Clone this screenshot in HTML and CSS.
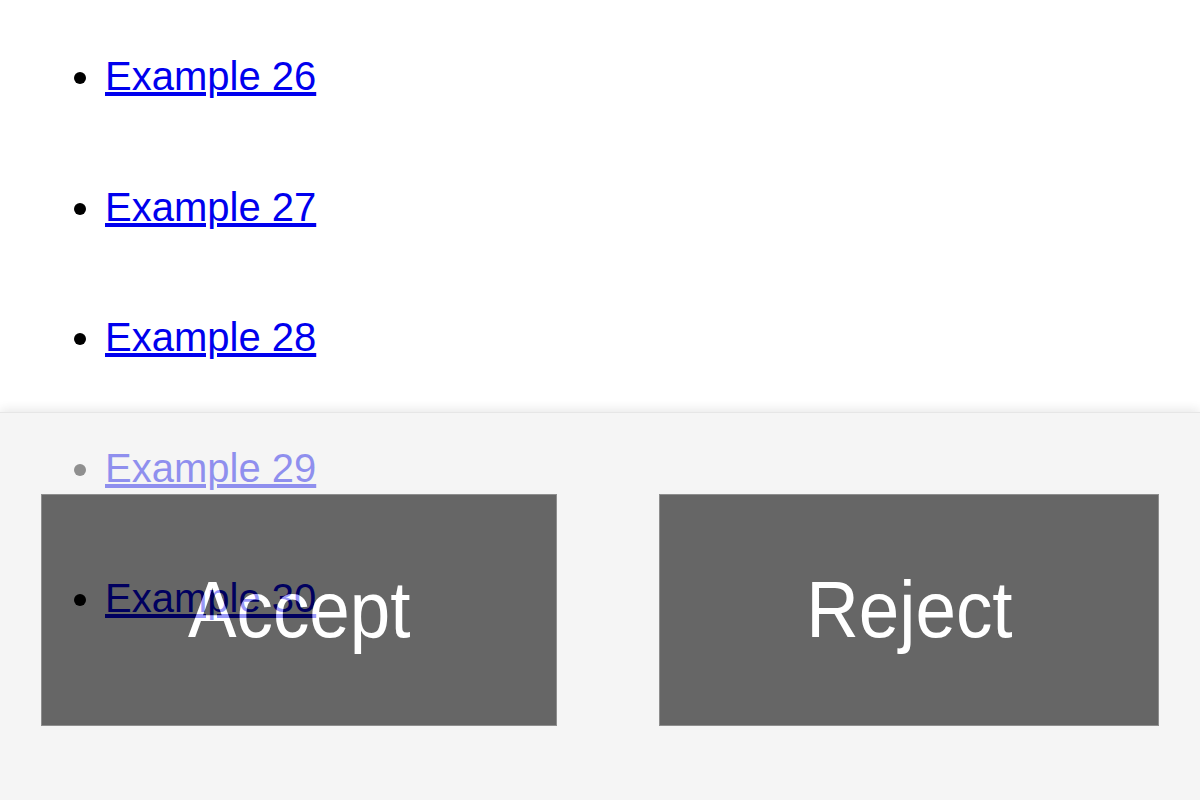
FILE: index.html
```html
<!DOCTYPE html>
<html lang="en">
<head>
  <meta charset="UTF-8">
  <title>Examples</title>
  <meta name="viewport" content="width=device-width, initial-scale=1.0">
  <link rel="stylesheet" href="styles.css">
</head>
<body>
  <!-- Example links -->
  <ul class="example-list">
    <li><a href="#">Example 26</a></li>
    <li><a href="#">Example 27</a></li>
    <li><a href="#">Example 28</a></li>
    <li><a href="#">Example 29</a></li>
    <li><a href="#">Example 30</a></li>
  </ul>

  <!-- Cookie banner -->
  <div class="consent-banner">
    <button class="consent-btn accept"><span class="btn-label">Accept</span></button>
    <button class="consent-btn reject"><span class="btn-label">Reject</span></button>
  </div>
</body>
</html>
```

FILE: styles.css
```css
/* ====== GLOBAL ====== */
* {
  box-sizing: border-box;
}
body {
  margin: 0;
  font-family: "Liberation Sans", Arial, sans-serif;
  background-color: #fff;
  height: 800px;
  overflow: hidden;
}

/* ====== EXAMPLE LIST ====== */
.example-list {
  margin: 0;
  padding: 53px 0 0 105px;
  font-size: 40px;
}
.example-list li {
  line-height: 46px;
  margin-bottom: 84.5px;
}
.example-list a {
  color: #0000ee;
}

/* ====== CONSENT BANNER ====== */
.consent-banner {
  position: fixed;
  left: 0;
  right: 0;
  bottom: 0;
  height: 388px;
  padding: 81px 41px 0;
  background-color: #eee;
  border-top: 1px solid #d6d6d6;
  box-shadow: 0 -3px 10px rgba(0,0,0,0.15);
  opacity: 0.6;
  display: flex;
  justify-content: space-between;
  align-items: flex-start;
}
.consent-btn {
  height: 232px;
  background-color: #000;
  color: #fff;
  border: 1px solid #444;
  font-family: "Liberation Sans", Arial, sans-serif;
  font-size: 80px;
  padding: 0;
  cursor: pointer;
}
/* label is a touch narrower than plain Arial */
.btn-label {
  display: inline-block;
  transform: scaleX(0.91);
}
.consent-btn.accept {
  width: 516px;
}
.consent-btn.reject {
  width: 500px;
}
```
